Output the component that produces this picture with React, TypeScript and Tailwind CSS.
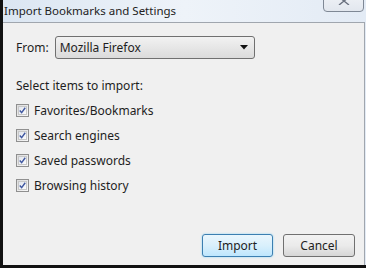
import React from "react";

const items = [
  "Favorites/Bookmarks",
  "Search engines",
  "Saved passwords",
  "Browsing history",
];

function CheckBox() {
  return (
    <div className="w-[13px] h-[13px] border border-[#8f8f8f] bg-gradient-to-br from-[#dcdcdc] to-[#f8f8f8] p-[1px]">
      <div className="w-full h-full border border-[#c8c8c8] bg-gradient-to-br from-[#e2e6ee] to-[#fbfbfb] flex items-center justify-center">
        <svg width="9" height="9" viewBox="0 0 9 9">
          <path d="M1 4.4 L3.4 7.2 L8 1" fill="none" stroke="#3f57a0" strokeWidth="1.8" />
        </svg>
      </div>
    </div>
  );
}

export default function App() {
  return (
    <div
      className="w-[366px] h-[268px] flex flex-col border-l-[3px] border-b-[3px] border-[#111] bg-gradient-to-r from-[#dbe6f2] via-[#eef3f9] to-[#e3ebf5] text-[#1e1e1e] overflow-hidden"
      style={{ fontFamily: '"Noto Sans", "Open Sans", sans-serif' }}
    >
      {/* title bar */}
      <div className="relative h-[22px] flex items-center pl-[1px]">
        <span className="text-[11.5px] text-[#222] leading-none">
          Import Bookmarks and Settings
        </span>
        <div className="absolute right-[2px] top-[-12px] w-[41px] h-[24px] rounded-b-[4px] border border-[#7f8895] bg-gradient-to-b from-[#f4f6f9] to-[#e2e7ee] flex items-end justify-center pb-[6px]">
          <svg width="12" height="8" viewBox="0 0 12 8">
            <path d="M1 0 L11 8 M11 0 L1 8" stroke="#6b7280" strokeWidth="1.4" />
          </svg>
        </div>
      </div>

      {/* content */}
      <div className="flex-1 mr-[1px] border-t border-r border-[#a0a6ae] bg-[#f0f0f0] flex flex-col text-[12px]">
        <div className="flex items-center mt-[13px] pl-[13px] gap-[6px]">
          <span>From:</span>
          <div className="w-[200px] h-[23px] rounded-[3px] border border-[#707070] bg-gradient-to-b from-[#f2f2f2] to-[#dbdbdb] flex items-center pl-[4px] pr-[6px]">
            <span className="flex-1">Mozilla Firefox</span>
            <svg width="8" height="5" viewBox="0 0 8 5">
              <path d="M0 0 H8 L4 4.5 Z" fill="#111" />
            </svg>
          </div>
        </div>

        <div className="mt-[18px] pl-[13px]">Select items to import:</div>

        <div className="flex flex-col gap-[8px] mt-[7px] pl-[13px]">
          {items.map((label) => (
            <div key={label} className="flex items-center gap-[5px] h-[17px]">
              <CheckBox />
              <span>{label}</span>
            </div>
          ))}
        </div>

        <div className="flex-1" />

        <div className="flex justify-end gap-[10px] pr-[9px] pb-[8px]">
          <div className="w-[71px] h-[23px] rounded-[3px] border border-[#3c7fb1] shadow-[0_0_2px_#7fd0f7] bg-gradient-to-b from-[#eaf6fd] via-[#d9f0fc] to-[#bee6fd] flex items-center justify-center">
            Import
          </div>
          <div className="w-[72px] h-[23px] rounded-[3px] border border-[#707070] bg-gradient-to-b from-[#f2f2f2] via-[#ebebeb] to-[#d6d6d6] flex items-center justify-center">
            Cancel
          </div>
        </div>
      </div>
    </div>
  );
}
